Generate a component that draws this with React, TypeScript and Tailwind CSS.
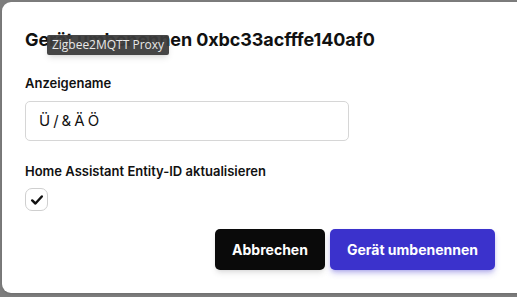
// Rename-device dialog over a dimmed page, with a native-looking tooltip on the title.
export default function App() {
  return (
    <div className="relative h-[297px] w-[517px] overflow-hidden bg-[#7d7d7d] pl-[2px] pt-[2px] font-['Inter',sans-serif] text-[#111]">
      <div className="flex h-[291px] w-[530px] flex-col rounded-[9px] bg-white pl-[23px] pt-[26px] shadow">
        <h1 className="text-[18px] leading-[24px] font-bold tracking-[-0.1px]">
          Gerät umbenennen 0xbc33acfffe140af0
        </h1>

        <label className="mt-[22px] text-[13px] leading-[18px] font-semibold">Anzeigename</label>
        <div className="mt-[9px] flex h-[40px] w-[324px] items-center rounded-[5px] border border-[#d6d6d6] px-[13px] text-[15px] tracking-[-0.6px]">
          Ü / &amp; Ä Ö
        </div>

        <label className="mt-[21px] text-[13px] leading-[18px] font-semibold">
          Home Assistant Entity-ID aktualisieren
        </label>
        <div className="mt-[8px] flex h-[23px] w-[23px] items-center justify-center rounded-[7px] border border-[#cfcfcf]">
          <svg viewBox="0 0 16 16" className="h-[14px] w-[14px]">
            <path
              d="M2.5 8.5 L6.2 12 L13.5 4"
              fill="none"
              stroke="#111"
              strokeWidth="2.8"
              strokeLinecap="round"
              strokeLinejoin="round"
            />
          </svg>
        </div>

        <div className="mt-[18px] flex w-[470px] justify-end gap-[5px]">
          <button className="h-[41px] w-[110px] rounded-[5px] bg-[#0a0a0a] text-[14px] font-bold text-white shadow-md">
            Abbrechen
          </button>
          <button className="h-[41px] w-[165px] rounded-[5px] bg-[#3b32cc] text-[14px] font-bold text-white shadow-md shadow-[#3b32cc]/30">
            Gerät umbenennen
          </button>
        </div>
      </div>

      <div className="absolute left-[47px] top-[35px] flex h-[20px] w-[122px] items-center justify-center rounded-[2px] bg-[#3c3c3c]/95 font-['Open_Sans',sans-serif] text-[12px] text-[#e8e8e8] shadow-md">
        Zigbee2MQTT Proxy
      </div>
    </div>
  );
}
